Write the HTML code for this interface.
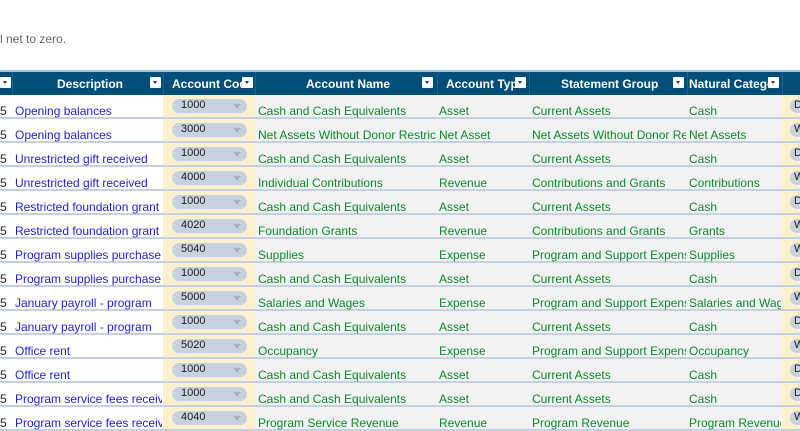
<!DOCTYPE html>
<html><head><meta charset="utf-8"><style>
*{margin:0;padding:0;box-sizing:border-box}
body{width:800px;height:430px;overflow:hidden;background:#fff;font-family:"Liberation Sans",sans-serif;font-size:12px;position:relative}
.note{position:absolute;left:0;top:32px;color:#666;font-size:12px}
.hdr{position:absolute;left:0;top:70px;width:800px;height:25px;background:#004f7b;border-top:2px solid #a9c1d9}
.h{position:absolute;top:5px;color:#fff;font-weight:bold;white-space:nowrap;overflow:hidden}
.fb{position:absolute;top:5px;width:11px;height:11px;background:#fff;border-radius:1px}
.fb:after{content:"";position:absolute;left:3px;top:4px;border-left:2.5px solid transparent;border-right:2.5px solid transparent;border-top:3px solid #333}
.vs{position:absolute;top:0;width:1px;height:23px;background:#1d6390}
.row{position:absolute;left:0;width:800px;height:24px;background:#f2f2f2;border-bottom:2px solid #c3d1e2}
.c{position:absolute;top:9px;white-space:nowrap;overflow:hidden;color:#0a8a2a}
.w{position:absolute;top:0;height:22px;background:#fff}
.cr{position:absolute;top:0;height:22px;background:#fdf0cc}
.pill{position:absolute;top:4px;height:14px;background:#c7d2de;border-radius:7px;font-size:11px;color:#222;padding-left:9px;line-height:13px;overflow:hidden}
.pill:after{content:"";position:absolute;right:6px;top:5px;border-left:4px solid transparent;border-right:4px solid transparent;border-top:5px solid #a8b3bf}
.d{color:#1f1fd8}
</style></head><body>
<div class="note">l net to zero.</div>
<div class="hdr">
<div class="fb" style="left:0"></div>
<div class="vs" style="left:12px"></div>
<div class="h" style="left:57px">Description</div>
<div class="fb" style="left:150px"></div>
<div class="vs" style="left:163px"></div>
<div class="h" style="left:172px;width:72px">Account Code</div>
<div class="fb" style="left:242px"></div>
<div class="vs" style="left:255px"></div>
<div class="h" style="left:306px">Account Name</div>
<div class="fb" style="left:422px"></div>
<div class="vs" style="left:437px"></div>
<div class="h" style="left:446px;width:70px">Account Type</div>
<div class="fb" style="left:515px"></div>
<div class="vs" style="left:529px"></div>
<div class="h" style="left:561px">Statement Group</div>
<div class="fb" style="left:673px"></div>
<div class="vs" style="left:687px"></div>
<div class="h" style="left:689px;width:90px">Natural Category</div>
<div class="fb" style="left:768px"></div>
<div class="vs" style="left:782px"></div>
</div>
<div id="rows"></div>
<script>
var R=[["Opening balances","1000","Cash and Cash Equivalents","Asset","Current Assets","Cash","D"],
["Opening balances","3000","Net Assets Without Donor Restrictions","Net Asset","Net Assets Without Donor Restrictions","Net Assets","W"],
["Unrestricted gift received","1000","Cash and Cash Equivalents","Asset","Current Assets","Cash","D"],
["Unrestricted gift received","4000","Individual Contributions","Revenue","Contributions and Grants","Contributions","W"],
["Restricted foundation grant","1000","Cash and Cash Equivalents","Asset","Current Assets","Cash","D"],
["Restricted foundation grant","4020","Foundation Grants","Revenue","Contributions and Grants","Grants","W"],
["Program supplies purchase","5040","Supplies","Expense","Program and Support Expenses","Supplies","W"],
["Program supplies purchase","1000","Cash and Cash Equivalents","Asset","Current Assets","Cash","D"],
["January payroll - program","5000","Salaries and Wages","Expense","Program and Support Expenses","Salaries and Wages","W"],
["January payroll - program","1000","Cash and Cash Equivalents","Asset","Current Assets","Cash","D"],
["Office rent","5020","Occupancy","Expense","Program and Support Expenses","Occupancy","W"],
["Office rent","1000","Cash and Cash Equivalents","Asset","Current Assets","Cash","D"],
["Program service fees received","1000","Cash and Cash Equivalents","Asset","Current Assets","Cash","D"],
["Program service fees received","4040","Program Service Revenue","Revenue","Program Revenue","Program Revenue","W"]];
var h="";
R.forEach(function(r,i){var t=95+i*24;
h+='<div class="row" style="top:'+t+'px">'+
'<div class="w" style="left:0;width:163px"></div>'+
'<div class="c" style="left:0;color:#222">5</div>'+
'<div class="c d" style="left:15px;width:147px">'+r[0]+'</div>'+
'<div class="cr" style="left:163px;width:92px"></div>'+
'<div class="pill" style="left:172px;width:75px">'+r[1]+'</div>'+
'<div class="c" style="left:258px;width:178px">'+r[2]+'</div>'+
'<div class="c" style="left:439px;width:89px">'+r[3]+'</div>'+
'<div class="c" style="left:532px;width:154px">'+r[4]+'</div>'+
'<div class="c" style="left:689px;width:92px">'+r[5]+'</div>'+
'<div class="cr" style="left:782px;width:18px"></div>'+
'<div class="pill" style="left:790px;width:40px;padding-left:4px">'+r[6]+'</div>'+
'</div>';});
document.getElementById("rows").innerHTML=h;
</script>
</body></html>
